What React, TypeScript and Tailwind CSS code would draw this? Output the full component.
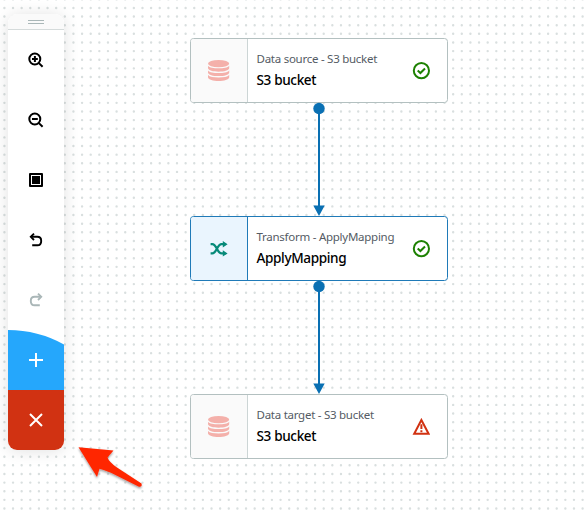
import type { ReactNode } from "react";

function Cell({ children, className = "" }: { children: ReactNode; className?: string }) {
  return <button className={`flex h-[60px] w-full shrink-0 items-center justify-center ${className}`}>{children}</button>;
}

function Magnifier({ plus }: { plus?: boolean }) {
  return (
    <svg width="16" height="16" viewBox="0 0 16 16" fill="none" stroke="#000" strokeWidth="2">
      <circle cx="6.8" cy="7" r="5.5" />
      <path d="M10.9 11.1 14.6 14.8M4 7h5.8" />
      {plus && <path d="M6.9 4.1v5.8" />}
    </svg>
  );
}

function Undo({ color, flip }: { color: string; flip?: boolean }) {
  return (
    <svg width="16" height="16" viewBox="0 0 16 16" fill="none" stroke={color} strokeWidth="1.9" className={flip ? "-scale-x-100" : ""}>
      <path d="M3.5 4.8H9.3C12 4.8 13.2 6.6 13.2 8.9S12 13.2 9.4 13.2H4.2" />
      <path d="M6 1.6 2.8 4.8 6 8" />
    </svg>
  );
}

function Toolbar() {
  return (
    <aside className="absolute left-2 top-[14px] flex h-[436px] w-14 flex-col overflow-hidden rounded-[9px] bg-white">
      <div className="flex h-4 shrink-0 flex-col items-center justify-center gap-[2px] border-b border-[#d5dbdb] bg-[#fafafa] pt-px">
        <span className="h-px w-4 bg-[#aab7b8]" />
        <span className="h-px w-4 bg-[#aab7b8]" />
      </div>
      <Cell><Magnifier plus /></Cell>
      <Cell><Magnifier /></Cell>
      <Cell>
        <svg width="14" height="14" viewBox="0 0 14 14">
          <rect width="14" height="14" rx="1" />
          <rect x="2.5" y="2.5" width="9" height="9" fill="none" stroke="#fff" />
        </svg>
      </Cell>
      <Cell><Undo color="#000" /></Cell>
      <Cell><Undo color="#aab7b8" flip /></Cell>
      <Cell>
        <svg width="56" height="60" viewBox="0 0 56 60">
          <path d="M0 0Q30 0 56 14.5V60H0Z" fill="#25a7fc" />
          <path d="M28 23v14M21 30h14" stroke="#fff" strokeWidth="2" />
        </svg>
      </Cell>
      <Cell className="bg-[#d13212]">
        <svg width="14" height="14" viewBox="0 0 14 14" stroke="#fff" strokeWidth="2">
          <path d="m1 1 12 12M13 1 1 13" />
        </svg>
      </Cell>
    </aside>
  );
}

function Bucket() {
  return (
    <svg width="22" height="22" viewBox="0 0 22 22" fill="#f4b0aa">
      <ellipse cx="10.6" cy="3.6" rx="10.6" ry="3.6" />
      <path d="M0 5.7C1.6 7.6 5.6 8.3 10.6 8.3s9-.7 10.6-2.6v2.6C20.6 10.5 16.3 11.7 10.6 11.7S.6 10.5 0 8.3Z" />
      <path d="M0 10.4C1.6 12.3 5.6 13 10.6 13s9-.7 10.6-2.6v2.3C20.6 14.9 16.3 16.1 10.6 16.1S.6 14.9 0 12.7Z" />
      <path d="M0 15C1.6 16.8 5.6 17.5 10.6 17.5s9-.7 10.6-2.5v2.4C20.6 19.6 16.3 20.9 10.6 20.9S.6 19.6 0 17.4Z" />
    </svg>
  );
}

function Shuffle() {
  return (
    <svg width="18" height="16" viewBox="0 0 18 16" fill="none" stroke="#078a79" strokeWidth="2.3">
      <path d="M.6 3.2h1.6C6.8 3.2 7 12.4 11.6 12.4H14M.6 12.4h1.6C6.8 12.4 7 3.2 11.6 3.2H14" />
      <path d="m12.8 0 4.8 3.2-4.8 3.2ZM12.8 9.2l4.8 3.2-4.8 3.2Z" fill="#078a79" stroke="none" />
    </svg>
  );
}

function Success() {
  return (
    <svg width="18" height="18" viewBox="0 0 18 18" fill="none" stroke="#1d8102" strokeWidth="2">
      <circle cx="9.4" cy="8.7" r="7.6" />
      <path d="m5.7 8.5 2.7 2.5 4.6-4.5" />
    </svg>
  );
}

function Warning() {
  return (
    <svg width="18" height="18" viewBox="0 0 18 18" fill="none" stroke="#d13212" strokeWidth="2">
      <path d="M9.4 2 2.2 15.8H16.6Z" />
      <path d="M9.4 6.3v4.6M9.4 12.2v2" />
    </svg>
  );
}

interface NodeProps {
  place: string;
  kind: string;
  name: string;
  icon: ReactNode;
  status: ReactNode;
  active?: boolean;
}

function Node({ place, kind, name, icon, status, active }: NodeProps) {
  return (
    <section className={`absolute left-[190px] flex h-[65px] w-[258px] overflow-hidden rounded-[3.5px] border bg-white ${active ? "border-[#1f7ab8]" : "border-[#b3c0c0]"} ${place}`}>
      <div className={`flex w-[57px] shrink-0 items-center justify-center border-r ${active ? "border-[#1f7ab8] bg-[#eaf5fe]" : "border-[#ccd5d5] bg-[#fafafa]"}`}>{icon}</div>
      <div className="flex flex-1 flex-col pl-[8.5px] pt-[10px]">
        <span className="h-5 whitespace-nowrap text-[11.5px] leading-5 tracking-[-0.26px] text-[#545b64]">{kind}</span>
        <span className="h-[22px] whitespace-nowrap text-[13.6px] font-medium leading-[22px] tracking-[-0.38px] text-black">{name}</span>
      </div>
      <div className="mr-[17px] flex items-center">{status}</div>
    </section>
  );
}

const PITCH = 8.63;
const DOT_ROWS = Array.from({ length: 61 }, (_, row) => -0.7 + row * PITCH);

export default function App() {
  return (
    <main className="relative h-[516px] w-[587px] overflow-hidden bg-white font-['Noto_Sans',sans-serif]">
      <svg className="absolute inset-0" width="587" height="516" stroke="#d9dfdf" strokeWidth="2.4" strokeLinecap="round" strokeDasharray="0 8.63">
        {DOT_ROWS.map((y) => (
          <path key={y} d={`M4.4 ${y}H590`} />
        ))}
      </svg>
      <div className="absolute left-2 top-[14px] h-[436px] w-14 rounded-[9px] shadow-[0_1px_16px_rgba(0,0,0,0.12)]" />
      <Toolbar />
      <Node place="top-[38px]" kind="Data source - S3 bucket" name="S3 bucket" icon={<Bucket />} status={<Success />} />
      <Node place="top-[216px]" kind="Transform - ApplyMapping" name="ApplyMapping" icon={<Shuffle />} status={<Success />} active />
      <Node place="top-[394px]" kind="Data target - S3 bucket" name="S3 bucket" icon={<Bucket />} status={<Warning />} />
      <svg className="absolute inset-0" width="587" height="516">
        <defs>
          <filter id="arrowShadow" x="-20%" y="-20%" width="150%" height="150%">
            <feDropShadow dx="0" dy="1.5" stdDeviation="1" floodColor="#000" floodOpacity="0.4" />
          </filter>
        </defs>
        <g fill="#0a70b3">
          <circle cx="319" cy="108.5" r="5.7" />
          <path d="M318 108h2v97.5h4.7L319 216l-5.7-10.5h4.7Z" />
          <circle cx="319" cy="286.5" r="5.7" />
          <path d="M318 286h2v97.5h4.7L319 394l-5.7-10.5h4.7Z" />
        </g>
        <path d="M78.5 447.3 113.5 450.5 107.5 457.5Q109 462 117 467.5L141.5 483.5Q142.5 487 139 486.7L111 472.7Q102 469.3 99.5 468.8L97 477Z" fill="#ff2600" filter="url(#arrowShadow)" />
      </svg>
    </main>
  );
}
